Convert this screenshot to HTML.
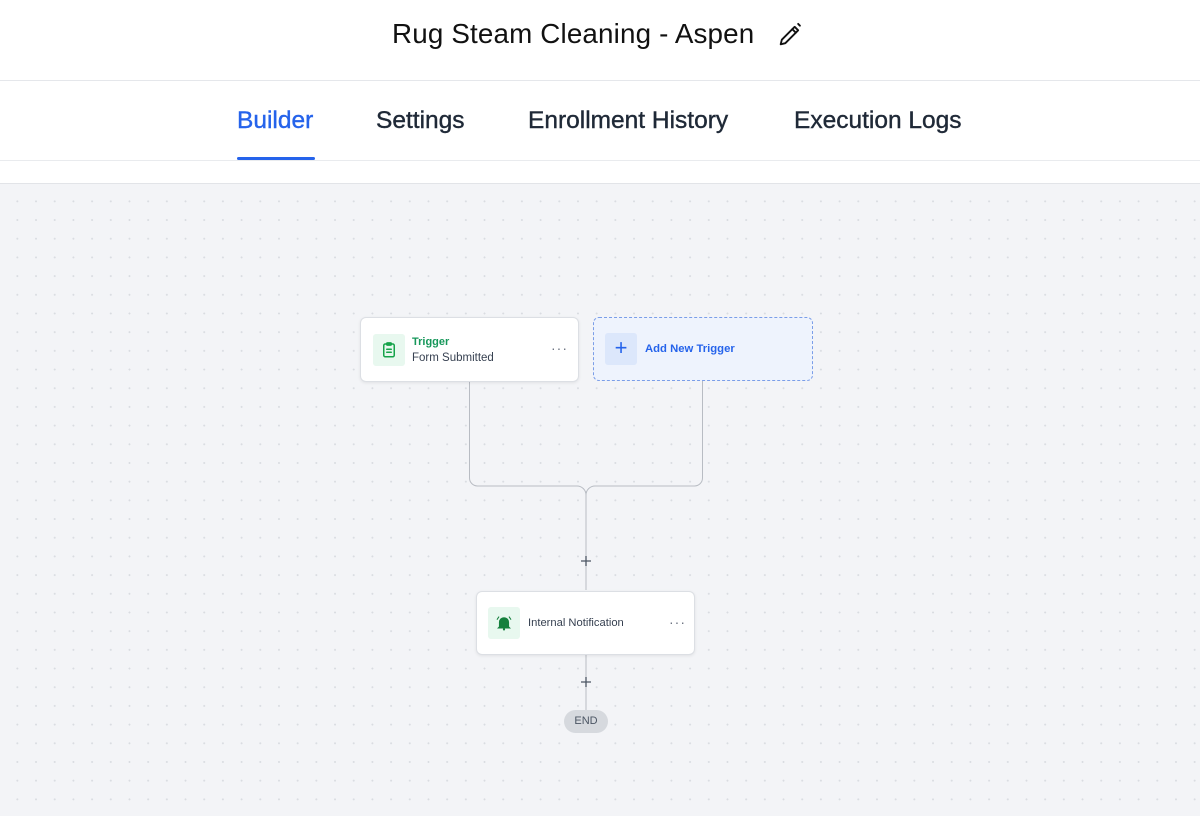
<!DOCTYPE html>
<html><head><style>
*{margin:0;padding:0;box-sizing:border-box}
body{width:1200px;height:816px;overflow:hidden;font-family:"Liberation Sans",Arial,sans-serif;background:#fff;position:relative}
.a{position:absolute}
.title{left:392px;top:18px;font-size:27.8px;color:#111;white-space:nowrap;letter-spacing:0.15px}
.tab{top:107px;font-size:24.5px;color:#1f2937;white-space:nowrap;-webkit-text-stroke:0.4px currentColor}
.canvas{left:0;top:183px;width:1200px;height:633px;background-color:#f3f4f7;background-image:radial-gradient(circle,#d9dce1 0.8px,transparent 1.1px);background-size:18.7px 18.7px;background-position:8px 8px;border-top:1px solid #e2e4e8}
.card{background:#fff;border:1px solid #dcdfe4;border-radius:6px;box-shadow:0 1px 3px rgba(0,0,0,.08)}
.ico{width:32px;height:32px;background:#e8f8ef;border-radius:3px;display:flex;align-items:center;justify-content:center}
.dots{color:#6b7280;font-size:14px;letter-spacing:1px}
</style></head><body>
<div class="a title">Rug Steam Cleaning - Aspen</div>
<svg class="a" style="left:776px;top:21px" width="28" height="28" viewBox="0 0 24 24" fill="none" stroke="#111" stroke-width="1.6" stroke-linecap="round" stroke-linejoin="round"><path d="M4 20l1-4L16 5l3 3L8 19z"/><path d="M14 7l3 3"/><path d="M19 2.5l1.5 1.5"/></svg>
<div class="a" style="left:0;top:80px;width:1200px;height:1px;background:#e5e7eb"></div>
<div class="a tab" style="left:237px;color:#2563eb">Builder</div>
<div class="a" style="left:237px;top:157px;width:78px;height:3px;background:#2563eb;border-radius:2px"></div>
<div class="a tab" style="left:376px">Settings</div>
<div class="a tab" style="left:528px">Enrollment History</div>
<div class="a tab" style="left:794px">Execution Logs</div>
<div class="a" style="left:0;top:160px;width:1200px;height:1px;background:#e9ebee"></div>
<div class="a canvas"></div>
<svg class="a" style="left:0;top:0" width="1200" height="816" fill="none" stroke="#b8bcc3" stroke-width="1">
<path d="M469.5 381V478a8 8 0 0 0 8 8H577a9 9 0 0 1 9 9V590"/>
<path d="M702.5 381V478a8 8 0 0 1-8 8H595a9 9 0 0 0-9 9"/>
<path d="M586 655V710"/>
<path d="M581 561h10M586 556v10M581 682h10M586 677v10" stroke="#4b5563" stroke-width="1.3"/>
</svg>
<div class="a card" style="left:360px;top:317px;width:219px;height:65px">
 <div class="a ico" style="left:12px;top:16px"><svg width="18" height="18" viewBox="0 0 24 24" fill="none" stroke="#16a34a" stroke-width="2" stroke-linecap="round"><rect x="5" y="4" width="14" height="17" rx="2"/><rect x="9" y="2.5" width="6" height="3" rx="1"/><path d="M9 11h6M9 15h6"/></svg></div>
 <div class="a" style="left:51px;top:18px;font-size:11px;color:#16975a;font-weight:bold">Trigger</div>
 <div class="a" style="left:51px;top:34px;font-size:11.5px;color:#374151">Form Submitted</div>
 <div class="a dots" style="left:190px;top:22px">···</div>
</div>
<div class="a" style="left:593px;top:317px;width:220px;height:64px;border:1px dashed #7b9ee8;border-radius:6px;background:#eef3fd">
 <div class="a" style="left:11px;top:15px;width:32px;height:32px;background:#dce7fb;border-radius:3px;color:#2563eb;font-size:22px;line-height:30px;text-align:center">+</div>
 <div class="a" style="left:51px;top:25px;font-size:11.3px;color:#2563eb;font-weight:bold">Add New Trigger</div>
</div>
<div class="a card" style="left:476px;top:591px;width:219px;height:64px">
 <div class="a ico" style="left:11px;top:15px"><svg width="18" height="18" viewBox="0 0 24 24" fill="#15803d" stroke="#15803d" stroke-width="1.5" stroke-linecap="round"><path d="M6 17V11a6 6 0 0 1 12 0v6l1.5 1.5H4.5z" /><circle cx="12" cy="20.5" r="1.5" stroke="none"/><path d="M3 7l2-3M21 7l-2-3" fill="none"/></svg></div>
 <div class="a" style="left:51px;top:25px;font-size:11.2px;color:#374151">Internal Notification</div>
 <div class="a dots" style="left:192px;top:22px">···</div>
</div>
<div class="a" style="left:564px;top:710px;width:44px;height:23px;background:#d6d9de;border-radius:12px;font-size:11px;color:#4b5563;text-align:center;line-height:23px">END</div>
</body></html>
